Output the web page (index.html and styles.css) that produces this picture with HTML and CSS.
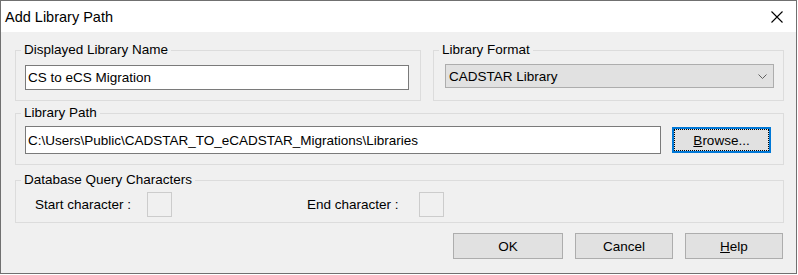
FILE: index.html
```html
<!DOCTYPE html>
<html lang="en">
<head>
  <meta charset="UTF-8" />
  <title>Add Library Path</title>
  <link rel="stylesheet" href="styles.css">
</head>
<body>

<div class="window">
  <div class="titlebar">
    <span class="title">Add Library Path</span>
    <svg class="close" width="12" height="12" viewBox="0 0 12 12">
      <path d="M0.5 0.5 L11.5 11.5 M11.5 0.5 L0.5 11.5" stroke="#000" stroke-width="1.1" fill="none"/>
    </svg>
  </div>

  <div class="content">
    <div class="row">
      <fieldset class="group group-name">
        <legend>Displayed Library Name</legend>
        <div class="group-body name-body">
          <input class="field name-field" type="text" value="CS to eCS Migration">
        </div>
      </fieldset>

      <fieldset class="group group-format">
        <legend>Library Format</legend>
        <div class="group-body format-body">
          <div class="combo">
            <span>CADSTAR Library</span>
            <svg width="9" height="5" viewBox="0 0 9 5">
              <path d="M0.5 0.5 L4.5 4.5 L8.5 0.5" stroke="#606060" stroke-width="1" fill="none"/>
            </svg>
          </div>
        </div>
      </fieldset>
    </div>

    <fieldset class="group group-path">
      <legend>Library Path</legend>
      <div class="group-body path-body">
        <input class="field path-field" type="text" value="C:\Users\Public\CADSTAR_TO_eCADSTAR_Migrations\Libraries">
        <button class="btn btn-browse"><u>B</u>rowse...</button>
      </div>
    </fieldset>

    <fieldset class="group group-query">
      <legend>Database Query Characters</legend>
      <div class="group-body query-body">
        <span class="query-label">Start character :</span>
        <span class="char-box start-box"></span>
        <span class="query-label">End character :</span>
        <span class="char-box"></span>
      </div>
    </fieldset>

    <div class="actions">
      <button class="btn btn-ok">OK</button>
      <button class="btn btn-std">Cancel</button>
      <button class="btn btn-std"><u>H</u>elp</button>
    </div>
  </div>
</div>

</body>
</html>
```

FILE: styles.css
```css
* {
  box-sizing: border-box;
}

body {
  margin: 0;
  font-family: "Liberation Sans", Arial, sans-serif;
  font-size: 13.5px;
  color: #000;
  background: #fff;
}

.window {
  width: 797px;
  height: 274px;
  border: 1px solid #707070;
  background: #f0f0f0;
}

/* title bar */
.titlebar {
  height: 31px;
  background: #fff;
  display: flex;
  align-items: center;
  justify-content: space-between;
  padding: 0 13px 0 4px;
}

.title {
  font-size: 14.5px;
  padding-top: 1px;
}

.close {
  display: block;
}

/* dialog body */
.content {
  padding: 10px 12px 0 14px;
}

.row {
  display: flex;
  gap: 12px;
}

.group {
  margin: 0;
  padding: 0;
  min-width: 0;
  border: 1px solid #dcdcdc;
}

.group legend {
  margin-left: 5px;
  padding: 0 3px;
  line-height: 16px;
  font-size: 13.5px;
}

.group-name {
  width: 406px;
}

.group-format {
  flex: 1;
}

.name-body {
  padding: 7px 11px 10px 9px;
}

.format-body {
  padding: 6px 9px 10px 11px;
}

.field {
  display: block;
  height: 25px;
  margin: 0;
  padding: 0 2px;
  border: 1px solid #7a7a7a;
  background: #fff;
  font-family: inherit;
  font-size: 13.5px;
  color: #000;
  outline: none;
}

.name-field {
  width: 100%;
}

.combo {
  height: 24px;
  border: 1px solid #adadad;
  background: #e1e1e1;
  display: flex;
  align-items: center;
  justify-content: space-between;
  padding: 0 6px 0 3px;
}

.combo svg {
  display: block;
}

.group-path {
  margin-top: 4px;
}

.path-body {
  display: flex;
  align-items: center;
  gap: 11px;
  padding: 5px 12px 10px 9px;
}

.path-field {
  width: 636px;
  height: 28px;
}

.btn {
  height: 26px;
  margin: 0;
  padding: 0;
  border: 1px solid #adadad;
  background: #e1e1e1;
  font-family: inherit;
  font-size: 13.5px;
  color: #000;
}

.btn-browse {
  width: 99px;
  border: 2px solid #0078d7;
  outline: 1px dotted #000;
  outline-offset: -3px;
}

.group-query {
  margin-top: 7px;
}

.query-body {
  display: flex;
  align-items: center;
  padding: 4px 0 5px 19px;
}

.query-label {
  width: 112px;
}

.char-box {
  width: 25px;
  height: 25px;
  border: 1px solid #cccccc;
  background: #f0f0f0;
}

.start-box {
  margin-right: 135px;
}

.actions {
  display: flex;
  justify-content: flex-end;
  gap: 12px;
  margin-top: 10px;
  padding-right: 1px;
}

.btn-ok {
  width: 110px;
}

.btn-std {
  width: 98px;
}
```
